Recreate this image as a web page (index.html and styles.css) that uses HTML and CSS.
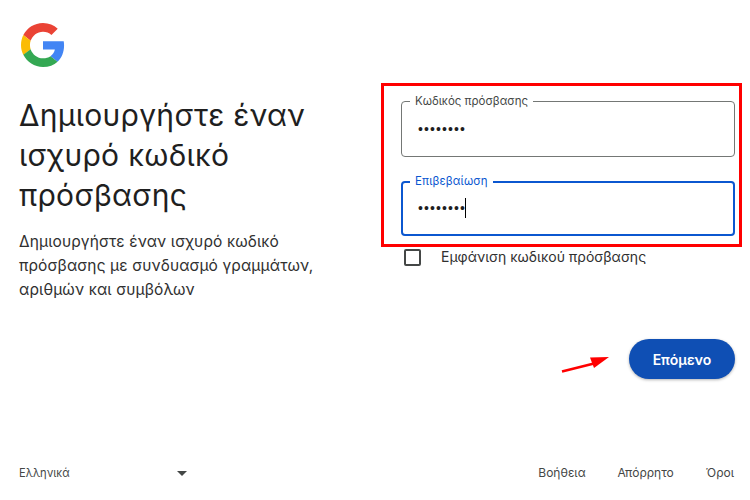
FILE: index.html
```html
<!DOCTYPE html>
<html lang="el">
<head>
<meta charset="utf-8">
<title>Δημιουργήστε έναν ισχυρό κωδικό πρόσβασης</title>
<link rel="stylesheet" href="styles.css">
</head>
<body>
<div class="page">
  <main class="main">
    <section class="intro">
      <svg class="logo" viewBox="0 0 48 48" aria-label="Google">
        <path fill="#EA4335" d="M24 9.5c3.54 0 6.71 1.22 9.21 3.6l6.85-6.85C35.9 2.38 30.47 0 24 0 14.62 0 6.51 5.38 2.56 13.22l7.98 6.19C12.43 13.72 17.74 9.5 24 9.5z"/>
        <path fill="#4285F4" d="M46.98 24.55c0-1.57-.15-3.09-.38-4.55H24v9.02h12.94c-.58 2.96-2.26 5.48-4.78 7.18l7.73 6c4.51-4.18 7.09-10.36 7.09-17.65z"/>
        <path fill="#FBBC05" d="M10.53 28.59c-.48-1.45-.76-2.99-.76-4.59s.27-3.14.76-4.59l-7.98-6.19C.92 16.46 0 20.12 0 24c0 3.88.92 7.54 2.56 10.78l7.97-6.19z"/>
        <path fill="#34A853" d="M24 48c6.48 0 11.93-2.13 15.89-5.81l-7.73-6c-2.15 1.45-4.92 2.3-8.16 2.3-6.26 0-11.57-4.22-13.47-9.91l-7.98 6.19C6.51 42.62 14.62 48 24 48z"/>
      </svg>
      <h1 class="title">Δημιουργήστε έναν ισχυρό κωδικό πρόσβασης</h1>
      <p class="lead">Δημιουργήστε έναν ισχυρό κωδικό πρόσβασης με συνδυασμό γραμμάτων, αριθμών και συμβόλων</p>
    </section>
    <section class="form">
      <div class="field">
        <span class="label">Κωδικός πρόσβασης</span>
        <span class="dots">••••••••</span>
      </div>
      <div class="field field-active">
        <span class="label">Επιβεβαίωση</span>
        <span class="dots">••••••••<i class="caret"></i></span>
      </div>
      <label class="show">
        <span class="box"></span>
        <span>Εμφάνιση κωδικού πρόσβασης</span>
      </label>
      <div class="actions">
        <button class="next" type="button">Επόμενο</button>
      </div>
    </section>
  </main>
  <footer class="footer">
    <div class="lang"><span>Ελληνικά</span><span class="tri"></span></div>
    <nav class="links"><a>Βοήθεια</a><a>Απόρρητο</a><a>Όροι</a></nav>
  </footer>
  <div class="mark"></div>
  <svg class="arrow" viewBox="0 0 50 18"><path d="M1 16.5 L33 8.5" stroke="#ff0000" stroke-width="2.8" fill="none"/><path d="M48 2 L29 2.5 L33 13z" fill="#ff0000"/></svg>
</div>
</body>
</html>
```
FILE: styles.css
```css
* { box-sizing: border-box; }
html, body { margin: 0; background: #fff; }
body { font-family: Inter, "Noto Sans", sans-serif; color: #1f1f1f; overflow: hidden; }
.page { position: relative; width: 750px; height: 500px; display: flex; flex-direction: column; }
.main { flex: 1; display: flex; padding: 23px 15px 0 20px; }
.intro { width: 381px; flex: none; }
.logo { display: block; width: 44px; height: 44px; margin-left: 1px; }
.title { margin: 28px 0 0 -1px; width: 300px; font-size: 30px; font-weight: 400; line-height: 40px; letter-spacing: .3px; }
.lead { margin: 15px 0 0 -1px; width: 300px; font-size: 15.5px; line-height: 24px; color: #303030; letter-spacing: .12px; }
.form { flex: 1; padding-top: 78px; }
.field { position: relative; height: 56px; border: 1px solid #747775; border-radius: 4px; padding: 13px 16px 0; margin-bottom: 24px; }
.field-active { height: 55px; border: 2px solid #0b57d0; padding: 11px 15px 0; }
.label { position: absolute; left: 8px; top: -8px; padding: 0 5px; background: #fff; font-size: 11.5px; line-height: 14px; color: #444746; }
.field-active .label { left: 7px; top: -9px; color: #0b57d0; letter-spacing: .15px; }
.dots { display: flex; align-items: center; height: 28px; font-size: 14px; letter-spacing: 1.1px; color: #1f1f1f; font-family: "Liberation Sans", sans-serif; }
.caret { display: block; width: 1px; height: 20px; background: #000; margin-left: -1px; }
.show { display: flex; align-items: center; margin-top: -13px; padding-left: 3px; font-size: 14px; line-height: 20px; color: #303030; gap: 20px; }
.box { width: 17px; height: 17px; border: 2px solid #444746; border-radius: 2px; flex: none; }
.actions { display: flex; justify-content: flex-end; margin-top: 72px; }
.next { width: 106px; height: 40px; border: 0; border-radius: 20px; background: #0f4fb4; color: #fff; font: 600 14px Inter, sans-serif; box-shadow: 0 1px 3px rgba(0,0,0,.3); }
.footer { height: 41px; flex: none; display: flex; justify-content: space-between; padding: 6px 16px 0 19px; font-size: 12px; line-height: 16px; color: #444746; }
.lang { width: 167px; display: flex; justify-content: space-between; align-items: center; height: 16px; font-size: 11.2px; }
.tri { width: 0; height: 0; border-left: 5px solid transparent; border-right: 5px solid transparent; border-top: 5px solid #444746; margin-right: -1px; }
.links { display: flex; gap: 32px; }
.mark { position: absolute; left: 381px; top: 83px; width: 361px; height: 164px; border: 3px solid #ff0000; }
.arrow { position: absolute; left: 561px; top: 355px; width: 50px; height: 18px; }
```
